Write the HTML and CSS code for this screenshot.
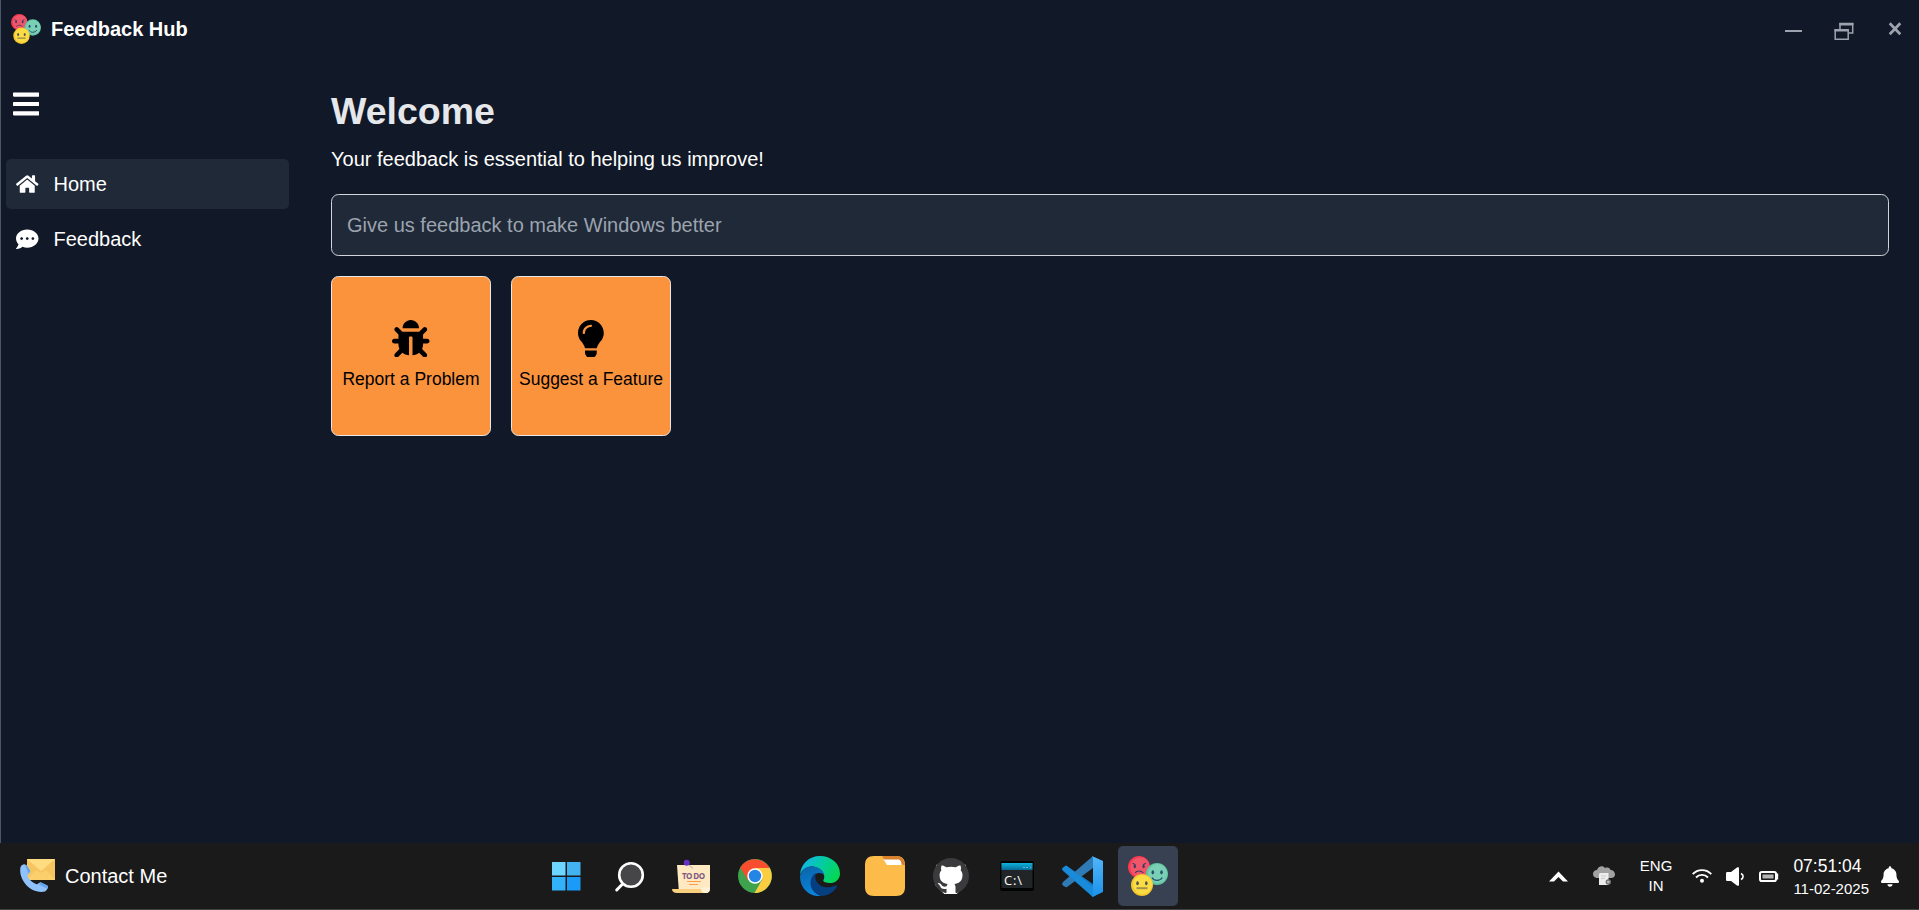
FILE: index.html
```
<!DOCTYPE html>
<html lang="en">
<head>
<meta charset="utf-8">
<title>Feedback Hub</title>
<link rel="stylesheet" href="styles.css">
</head>
<body>
<svg class="defs" width="0" height="0" aria-hidden="true">
  <defs>
    <linearGradient id="edgeA" x1="0" y1=".3" x2="1" y2=".7"><stop offset="0" stop-color="#12b5ea"/><stop offset=".45" stop-color="#05cba5"/><stop offset="1" stop-color="#05d84c"/></linearGradient>
    <linearGradient id="edgeB" x1="0" y1="0" x2=".3" y2="1"><stop offset="0" stop-color="#0b62a5"/><stop offset="1" stop-color="#0a84dd"/></linearGradient>
    <linearGradient id="cmdBar" x1="0" y1="0" x2="0" y2="1"><stop offset="0" stop-color="#0db4dd"/><stop offset="1" stop-color="#066b97"/></linearGradient>
    <linearGradient id="code" x1="0" y1="0" x2="0" y2="1"><stop offset="0" stop-color="#52b6fa"/><stop offset="1" stop-color="#1b92ec"/></linearGradient>
    <symbol id="faces" viewBox="0 0 40 40">
      <circle cx="11" cy="11" r="11" fill="#f7384f"/><circle cx="12" cy="11" r="9.8" fill="#f0566a"/>
      <g fill="#3b3b66"><ellipse cx="6.8" cy="10.5" rx="1.2" ry="1.8"/><ellipse cx="15.6" cy="10.5" rx="1.2" ry="1.8"/></g>
      <path d="M7 17c2-2.7 6-2.7 8.500 0M4.500 7.300l3 1.500M18 7.300l-3 1.500" fill="none" stroke="#3b3b66" stroke-width="1.100"/>
      <circle cx="29" cy="18" r="11" fill="#5fc4a3"/><circle cx="29.600" cy="17.600" r="9.500" fill="#7ad0b4"/>
      <g fill="#24506e"><ellipse cx="24.800" cy="16.300" rx="1.300" ry="2.100"/><ellipse cx="33.500" cy="16.300" rx="1.300" ry="2.100"/></g>
      <path d="M24 21.500c2 3.800 8 3.800 10.300 0" fill="none" stroke="#24506e" stroke-width="1.300"/>
      <circle cx="14" cy="29" r="11" fill="#f3c62e"/><circle cx="14.600" cy="28.600" r="9.600" fill="#fbdc43"/>
      <g fill="#50505c"><ellipse cx="9.500" cy="27.300" rx="1.300" ry="2"/><ellipse cx="18.300" cy="27.300" rx="1.300" ry="2"/></g>
      <path d="M8.500 32.200h11" stroke="#a3914d" stroke-width="2"/>
    </symbol>
  </defs>
</svg>
<div class="desktop">
  <section class="window">
    <header class="titlebar">
      <svg class="logo"><use href="#faces"/></svg>
      <h1 class="app-name">Feedback Hub</h1>
      <div class="controls">
        <svg width="20" height="20" viewBox="0 0 20 20"><path d="M1 12h17" stroke="#9ca3af" stroke-width="2"/></svg>
        <svg class="restore" width="20" height="20" viewBox="0 0 20 20" fill="none" stroke="#9ca3af" stroke-width="1.500"><path d="M6 7V1.600h12.700v9.400H15"/><path d="M1.200 8h13v9.200h-13z"/><path d="M.500 8.200h14.400M5.300 2.200h14.100" stroke-width="2.600"/></svg>
        <svg class="close" width="14" height="14" viewBox="0 0 14 14"><path d="M1.700 1.200l10.600 11M12.300 1.200l-10.600 11" stroke="#9ca3af" stroke-width="2.700"/></svg>
      </div>
    </header>
    <div class="content">
      <aside class="sidebar">
        <svg class="menu" viewBox="0 0 448 512" fill="#fff"><path d="M16 132h416c8.837 0 16-7.163 16-16V76c0-8.837-7.163-16-16-16H16C7.163 60 0 67.163 0 76v40c0 8.837 7.163 16 16 16zm0 160h416c8.837 0 16-7.163 16-16v-40c0-8.837-7.163-16-16-16H16c-8.837 0-16 7.163-16 16v40c0 8.837 7.163 16 16 16zm0 160h416c8.837 0 16-7.163 16-16v-40c0-8.837-7.163-16-16-16H16c-8.837 0-16 7.163-16 16v40c0 8.837 7.163 16 16 16z"/></svg>
        <nav class="nav">
          <a class="nav-item active"><svg class="nav-icon" viewBox="0 0 576 512" fill="#fff"><path d="M280.37 148.26L96 300.11V464a16 16 0 0 0 16 16l112.06-.29a16 16 0 0 0 15.92-16V368a16 16 0 0 1 16-16h64a16 16 0 0 1 16 16v95.64a16 16 0 0 0 16 16.05L464 480a16 16 0 0 0 16-16V300L295.67 148.26a12.19 12.19 0 0 0-15.3 0zM571.6 251.47L488 182.56V44.05a12 12 0 0 0-12-12h-56a12 12 0 0 0-12 12v72.61L318.47 43a48 48 0 0 0-61 0L4.34 251.47a12 12 0 0 0-1.6 16.9l25.5 31A12 12 0 0 0 45.15 301l235.22-193.74a12.19 12.19 0 0 1 15.3 0L530.9 301a12 12 0 0 0 16.9-1.6l25.5-31a12 12 0 0 0-1.7-16.93z"/></svg>Home</a>
          <a class="nav-item"><svg class="nav-icon" viewBox="0 0 512 512" fill="#fff"><path d="M256 32C114.600 32 0 125.100 0 240c0 49.600 21.400 95 57 130.700C44.500 421.100 2.700 466 2.200 466.500c-2.200 2.300-2.800 5.700-1.500 8.700S4.800 480 8 480c66.300 0 116-31.800 140.600-51.400 32.700 12.300 69 19.400 107.400 19.400 141.400 0 256-93.100 256-208S397.400 32 256 32zM128 272c-17.700 0-32-14.300-32-32s14.300-32 32-32 32 14.300 32 32-14.300 32-32 32zm128 0c-17.700 0-32-14.300-32-32s14.300-32 32-32 32 14.300 32 32-14.300 32-32 32zm128 0c-17.700 0-32-14.300-32-32s14.300-32 32-32 32 14.300 32 32-14.300 32-32 32z"/></svg>Feedback</a>
        </nav>
      </aside>
      <main class="main">
        <h2 class="heading">Welcome</h2>
        <p class="lead">Your feedback is essential to helping us improve!</p>
        <input class="search" type="text" placeholder="Give us feedback to make Windows better">
        <div class="cards">
          <button class="card"><svg class="card-icon" viewBox="0 0 512 512"><path d="M511.988 288.9c-.478 17.43-15.217 31.1-32.653 31.1H424v16c0 21.864-4.882 42.584-13.6 61.145l60.228 60.228c12.496 12.497 12.496 32.758 0 45.255-12.498 12.497-32.759 12.496-45.256 0l-54.736-54.736C345.886 467.965 314.351 480 280 480V236c0-6.627-5.373-12-12-12h-24c-6.627 0-12 5.373-12 12v244c-34.351 0-65.886-12.035-90.636-32.108l-54.736 54.736c-12.498 12.497-32.759 12.496-45.256 0-12.496-12.497-12.496-32.758 0-45.255l60.228-60.228C92.882 378.584 88 357.864 88 336v-16H32.666C15.230 320 .491 306.330.013 288.900-.484 270.816 14.028 256 32 256h56v-58.745l-46.628-46.628c-12.496-12.497-12.496-32.758 0-45.255 12.498-12.497 32.758-12.497 45.256 0L141.255 160h229.489l54.627-54.627c12.498-12.497 32.758-12.497 45.256 0 12.496 12.497 12.496 32.758 0 45.255L424 197.255V256h56c17.972 0 32.484 14.816 31.988 32.900zM257 0c-61.856 0-112 50.144-112 112h224C369 50.144 318.856 0 257 0z"/></svg>Report a Problem</button>
          <button class="card"><svg class="card-icon" viewBox="0 0 352 512"><path d="M96.060 454.350c.010 6.290 1.870 12.450 5.360 17.690l17.090 25.690a31.990 31.990 0 0 0 26.640 14.280h61.710a31.990 31.990 0 0 0 26.640-14.280l17.090-25.690a31.989 31.989 0 0 0 5.360-17.690l.040-38.350H96.010l.050 38.350zM0 176c0 44.370 16.450 84.850 43.560 115.780 16.520 18.850 42.360 58.230 52.210 91.450.040.260.070.520.110.780h160.240c.040-.260.070-.510.110-.780 9.850-33.220 35.690-72.600 52.210-91.450C335.550 260.850 352 220.370 352 176 352 78.610 272.910-.300 175.450 0 73.440.310 0 82.970 0 176zm176-80c-44.110 0-80 35.890-80 80 0 8.840-7.160 16-16 16s-16-7.160-16-16c0-61.760 50.240-112 112-112 8.840 0 16 7.160 16 16s-7.160 16-16 16z"/></svg>Suggest a Feature</button>
        </div>
      </main>
    </div>
  </section>
  <footer class="taskbar">
    <div class="contact">
      <svg width="36" height="34" viewBox="0 0 36 34">
        <path d="M7 0h28v21H7z" fill="#f7c560"/><path d="M7 0h28L21 12z" fill="#ffdc80"/><path d="M7 21l9-10 5 3 5-3 9 10z" fill="#fbcf6c"/>
        <path d="M.500 8C2 5.500 4 4.500 6 6l4 6c.700 1.500-1.500 3-2.500 4.500 1 4 4.500 6.500 8.500 8.500 2 .800 2.500-1.500 4.500-1.800l6.800 3.300c1.500 1.500.200 4.500-2.300 6C10 35.500-2 20 .500 8z" fill="#8fc2fa"/><path d="M5 6l1.500-.200 4 6.200-2 2.500zM19 25.500l1.500-2.300 7.300 3.500-1.500 2.600z" fill="#64a3ef"/>
      </svg>
      <span>Contact Me</span>
    </div>
    <div class="apps">
      <span class="app"><svg width="60" height="60"><g transform="translate(16 16)"><path d="M0 0h13.500v13.500H0z" fill="#6cd6ff"/><path d="M15 0h13.500v13.500H15z" fill="#42b2f1"/><path d="M0 15h13.500v13.500H0z" fill="#32b2fb"/><path d="M15 15h13.500v13.500H15z" fill="#1a9bf8"/></g></svg></span>
      <span class="app"><svg width="60" height="60"><circle cx="31" cy="29" r="11.800" fill="#464649" stroke="#fff" stroke-width="2.600"/><path d="M22.300 38.300L16.700 44" stroke="#fff" stroke-width="3" stroke-linecap="round"/></svg></span>
      <span class="app"><svg width="60" height="60"><path d="M16 19h33v24c0 2.500-1.500 4-4 4H18z" fill="#ffe9c2"/><path d="M11 43h29c0 2.300 1.500 4 4 4H16c-3 0-5-1.500-5-4z" fill="#f7cf7e"/><path d="M40 43c1-2 7-3 9-1 0 3-2 5-4.500 5S40 45.500 40 43z" fill="#fff1d6"/><path d="M27 18l5 4.500" stroke="#b3a6b8"/><circle cx="25.700" cy="16.700" r="3" fill="#6731c4"/><text class="todo" x="21" y="33" textLength="23">TO DO</text><path d="M26 35.500h14M28 38.500h9" stroke="#ff9c4a" stroke-width="1.200"/></svg></span>
      <span class="app"><svg width="60" height="60"><g transform="translate(13 13)"><circle cx="17" cy="17" r="17" fill="#3da34d"/><path d="M2.300 8.500L10 21.500 17 9h14.700A17 17 0 0 0 2.300 8.500z" fill="#f94d30"/><path d="M17 9h14.700A17 17 0 0 1 16.500 34L24.500 20z" fill="#fdcd41"/><circle cx="17" cy="17" r="7.700" fill="#fff"/><circle cx="17" cy="17" r="6.200" fill="#2585e5"/></g></svg></span>
      <span class="app"><svg width="60" height="60"><g transform="translate(10 10)"><path d="M0 19C.500 8 9 0 20 0c11 0 20 7.500 20 17.500C40 24 34.500 27.500 29 27c-4.500-.300-6.500-1.700-5.500-3.200C25.500 21 24 15 18 12 10 8 2 12 0 19z" fill="url(#edgeA)"/><path d="M0 20C2 12 9 8.500 16 11c5 1.800 8 5 8 8-2-3.500-10-3-12 4-2 7 2 14.500 9 17C9 41 0 32 0 20z" fill="url(#edgeB)"/><path d="M16 17c-2 4 0 12 8 14 5 1 9-.500 12-1.500 1-.300 1.500.300 1 1C34 36 28 40 21 40c-7-2-11-8-10.500-14 .300-4 2.500-7.500 5.500-9z" fill="#063f80"/></g></svg></span>
      <span class="app"><svg width="60" height="60"><g transform="translate(10 10)"><path d="M9 0h22c6 0 9 3 9 9v22c0 6-3 9-9 9H9c-6 0-9-3-9-9V9c0-6 3-9 9-9z" fill="#fdbb49"/><path d="M17 0h14c5 0 8 3 9 9l-9-1h-9z" fill="#d8812c"/><path d="M18.500 3.500h14c3 0 4 2 4 5.500H22z" fill="#fff"/></g></svg></span>
      <span class="app"><svg width="60" height="60"><g transform="translate(12 12) scale(2.250)"><path d="M1.500 3h13v9l-4 4H5l-4-4z" fill="#fff"/><path fill="#3b3b3d" d="M8 0C3.580 0 0 3.580 0 8c0 3.540 2.290 6.530 5.470 7.590.4.070.550-.170.550-.380 0-.190-.010-.820-.010-1.490-2.010.370-2.530-.490-2.690-.940-.090-.230-.480-.940-.820-1.130-.280-.150-.680-.520-.010-.530.630-.010 1.080.580 1.230.820.720 1.210 1.870.870 2.330.660.070-.520.280-.870.510-1.070-1.780-.200-3.640-.890-3.640-3.950 0-.870.310-1.590.820-2.150-.080-.200-.360-1.020.080-2.120 0 0 .670-.210 2.200.820.640-.180 1.320-.270 2-.270s1.360.090 2 .270c1.530-1.040 2.200-.820 2.200-.820.440 1.100.160 1.920.080 2.120.510.560.820 1.270.820 2.150 0 3.070-1.870 3.750-3.650 3.950.290.250.540.730.540 1.480 0 1.070-.010 1.930-.010 2.200 0 .210.150.460.550.380A8.010 8.010 0 0 0 16 8c0-4.420-3.580-8-8-8z"/></g></svg></span>
      <span class="app"><svg width="60" height="60"><rect x="13" y="15" width="34" height="30" rx="2.500" fill="#020303"/><path d="M14.500 17h31v25h-31z" fill="#222527"/><path d="M14.500 17h31v7h-31z" fill="url(#cmdBar)"/><path d="M36 21.500h2m1 0h2m2-1l1 1-1 1" fill="none" stroke="#8bd0e5" stroke-width=".700"/><text class="prompt" x="17" y="38.500" textLength="18">C:\</text></svg></span>
      <span class="app"><svg width="60" height="60"><g transform="translate(9 10)"><path d="M0 13c0-1 4-4 5-3l36 25-10 6L1 15z" fill="#1678c5"/><path d="M0 28c0 1 4 4 5 3L31 12V0L1 26z" fill="#2e7bb5"/><path d="M0 13l4-3.500 27 21V41z" fill="#188cdb"/><path d="M30 0l11 5v31l-11 5c1-1 1-2 1-4V4c0-2 0-3-1-4z" fill="url(#code)"/></g></svg></span>
      <span class="app active"><svg width="40" height="40"><use href="#faces"/></svg></span>
    </div>
    <div class="tray">
      <svg class="chevron" width="19" height="11" viewBox="0 0 19 11"><path d="M0 10.500L9.500.500l9.500 10h-5L9.500 6 5 10.500z" fill="#fff"/></svg>
      <svg class="cloud" width="22" height="20" viewBox="0 0 22 20"><path d="M5 12C1 12 0 9.500 0 8c0-2 1.500-4 4-4 1-4 6-5 8-2 3-1.200 5 0 5.500 2C20 4 22 6 22 8.500c0 2-1.500 3.500-4 3.500z" fill="#a2a2a2"/><path d="M7 7h8.500v12H6V8z" fill="#ededed"/><path d="M8 10h5M8 12.500h4" stroke="#cacaca"/><circle cx="15.300" cy="16" r="2" fill="#bbb" stroke="#747474" stroke-width="1.400"/></svg>
      <div class="lang"><span>ENG</span><span>IN</span></div>
      <svg class="wifi" width="20" height="14" viewBox="0 0 20 14" fill="none" stroke="#fff" stroke-width="1.900"><path d="M.700 5.200C5.500-.300 14.500-.300 19.300 5.200M4 8.500c3.200-3.500 8.800-3.500 12 0"/><circle cx="10" cy="11.700" r="2" fill="#fff" stroke="none"/></svg>
      <svg class="sound" width="19" height="19" viewBox="0 0 19 19"><path d="M0 6.500C0 5.500.500 5 1.500 5H5l6-4.500c1-.700 2-.300 2 .700v16.600c0 1-1 1.400-2 .700L5 14H1.500C.500 14 0 13.500 0 12.500z" fill="#fff"/><path d="M15 6.500c2.800 1.500 2.800 4.500 0 6" fill="none" stroke="#fff" stroke-width="1.600"/></svg>
      <svg class="battery" width="20" height="11" viewBox="0 0 20 11"><rect x="1" y="1" width="16" height="9" rx="1.800" fill="none" stroke="#fff" stroke-width="2"/><path d="M3.500 3.500h11v4h-11z" fill="#b5b5b5"/><path d="M18.300 2.500v6" stroke="#fff" stroke-width="1.800"/></svg>
      <div class="clock"><span class="time">07:51:04</span><span class="date">11-02-2025</span></div>
      <svg class="bell" width="18" height="21" viewBox="0 0 448 512" fill="#fff"><path d="M224 512c35.320 0 63.970-28.650 63.970-64H160.030c0 35.350 28.650 64 63.970 64zm215.390-149.710c-19.320-20.760-55.470-51.990-55.470-154.290 0-77.700-54.480-139.900-127.940-155.160V32c0-17.670-14.320-32-31.980-32s-31.980 14.330-31.980 32v20.840C118.560 68.100 64.080 130.300 64.080 208c0 102.300-36.150 133.530-55.470 154.290-6 6.450-8.660 14.160-8.610 21.710.110 16.400 12.980 32 32.100 32h383.800c19.120 0 32-15.600 32.100-32 .050-7.550-2.610-15.270-8.610-21.710z"/></svg>
    </div>
  </footer>
</div>
</body>
</html>
```

FILE: styles.css
```
*, *::before, *::after { box-sizing: border-box; }
html { font-size: 20px; }
body {
  margin: 0;
  color: #fff;
  background: #1a1a1b;
  font: 1rem/1.5 "Liberation Sans", Arial, sans-serif;
  overflow: hidden;
}
h1, h2, p { margin: 0; }
svg { display: block; flex: none; }
.defs { position: absolute; }

.desktop { display: flex; flex-direction: column; height: 910px; }
.window {
  flex: 1;
  display: flex;
  flex-direction: column;
  background: #111827;
  border-left: 1px solid #4b5563;
}

.titlebar {
  display: flex;
  align-items: center;
  height: 58px;
  padding: 0 17px 0 10px;
}
.logo { width: 30px; height: 30px; }
.app-name { margin-left: 10px; font-size: 1rem; font-weight: 700; }
.controls { display: flex; margin-left: auto; align-items: center; }
.restore { margin: 6px 34px 0 30px; }

.content { flex: 1; display: flex; }
.sidebar { width: 288px; padding: 31px 0 0 5px; }
.menu { width: 26.250px; height: 30px; margin-left: 7px; }
.nav { display: flex; flex-direction: column; gap: 5px; margin-top: 40px; }
.nav-item {
  display: flex;
  align-items: center;
  height: 50px;
  padding: 0 10px;
  gap: 15px;
  border-radius: 5px;
}
.nav-item.active { background: #1f2937; }
.nav-icon { width: 22.500px; height: 20px; }
.nav-item:last-child .nav-icon { height: 22.500px; }

.main { flex: 1; padding: 31px 30px 0 42px; }
.heading {
  margin-bottom: 10px;
  color: #e5e7eb;
  font-size: 1.875rem;
  line-height: 2.250rem;
}
.search {
  display: block;
  width: 100%;
  height: 62px;
  margin-top: 20px;
  padding: 15px;
  color: #fff;
  background: #1f2937;
  border: 1px solid #d1d5db;
  border-radius: 7.500px;
  font: inherit;
}
.search::placeholder { color: #9ca3af; opacity: 1; }
.cards { display: flex; gap: 20px; margin-top: 20px; }
.card {
  display: flex;
  flex-direction: column;
  align-items: center;
  justify-content: center;
  gap: 10px;
  width: 160px;
  height: 160px;
  padding: 0;
  color: #000;
  background: #fb923c;
  border: 1px solid #e5e7eb;
  border-radius: 7.500px;
  font-family: inherit;
  font-size: .875rem;
  line-height: 1.250rem;
  white-space: nowrap;
}
.card-icon { height: 37.500px; }

.taskbar {
  display: grid;
  grid-template-columns: 536px auto 1fr;
  height: 67px;
  background: #1a1a1b;
  border-bottom: 1px solid #434345;
}
.contact { display: flex; align-items: center; gap: 9px; padding-left: 20px; }
.apps {
  display: grid;
  grid-template-columns: 64px 61px 64px 65px 65px 66px 66px 65.500px 65.500px 60px;
  align-items: center;
}
.app {
  display: flex;
  align-items: center;
  justify-content: center;
  width: 60px;
  height: 60px;
  border-radius: 5px;
}
.app.active { background: #374151; }
.todo { font: bold 8px "Open Sans", sans-serif; fill: #7b5680; }
.prompt { font: 13px "Open Sans", sans-serif; fill: #fff; }

.tray { display: flex; align-items: center; justify-content: flex-end; padding-right: 20px; }
.cloud { margin-left: 25px; }
.lang {
  display: flex;
  flex-direction: column;
  align-items: center;
  margin-left: 25px;
  font-size: .750rem;
  line-height: 1rem;
}
.wifi { margin-left: 20px; }
.sound { margin-left: 14px; }
.battery { margin-left: 14px; }
.clock { display: flex; flex-direction: column; margin-left: 14px; }
.time { font-size: .875rem; line-height: 1.250rem; }
.date { font-size: .750rem; line-height: 1rem; }
.bell { margin-left: 12px; }
```
